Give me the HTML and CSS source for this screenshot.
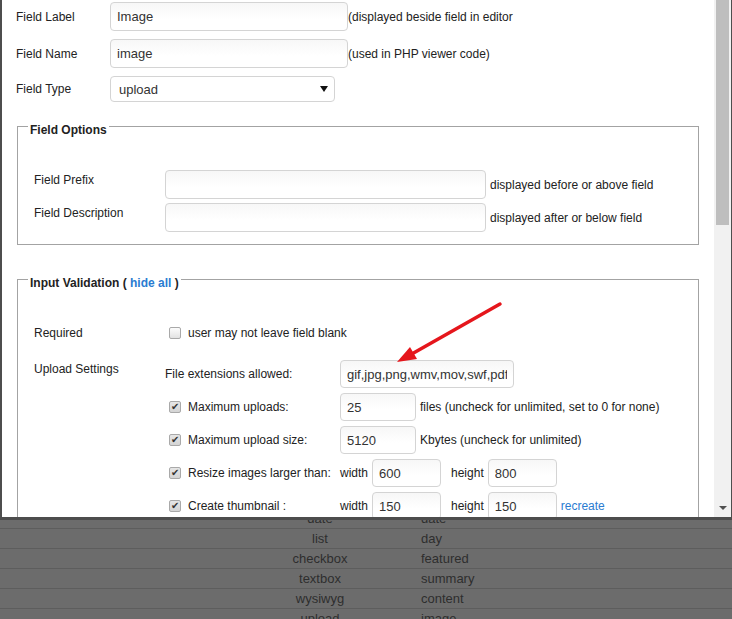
FILE: index.html
```html
<!DOCTYPE html>
<html lang="en">
<head>
<meta charset="UTF-8">
<meta name="viewport" content="width=device-width, initial-scale=1.0">
<title>Edit Field</title>
<link rel="stylesheet" href="styles.css">
</head>
<body>
<div class="dialog">
  <div class="dialog-body">
    <div class="field-row">
      <label class="field-label">Field Label</label>
      <input class="text field-input" type="text" value="Image"><span class="hint tight">(displayed beside field in editor</span>
    </div>
    <div class="field-row">
      <label class="field-label">Field Name</label>
      <input class="text field-input" type="text" value="image"> <span class="hint">(used in PHP viewer code)</span>
    </div>
    <div class="field-row">
      <label class="field-label">Field Type</label>
      <span class="select-wrap">
        <select class="select">
          <option>upload</option>
        </select>
      </span>
    </div>

    <fieldset class="group options">
      <legend>Field Options</legend>
      <div class="option-grid">
        <label class="option-label">Field Prefix</label>
        <input class="text option-input" type="text">
        <span class="hint">displayed before or above field</span>

        <label class="option-label">Field Description</label>
        <input class="text option-input" type="text">
        <span class="hint">displayed after or below field</span>
      </div>
    </fieldset>

    <fieldset class="group validation">
      <legend>Input Validation ( <a href="#" class="link">hide all</a> )</legend>
      <div class="validation-row required">
        <label class="option-label">Required</label>
        <label class="check-line"><input type="checkbox" class="check">user may not leave field blank</label>
      </div>
      <div class="validation-row upload">
        <label class="option-label">Upload Settings</label>
        <div class="upload-grid">
          <span class="cell">File extensions allowed:</span>
          <span class="cell"><input class="text ext-input" type="text" value="gif,jpg,png,wmv,mov,swf,pdf,doc,docx,zip"></span>

          <label class="cell"><input type="checkbox" class="check" checked>Maximum uploads:</label>
          <span class="cell"><input class="text num-input" type="text" value="25"><span class="hint">files (uncheck for unlimited, set to 0 for none)</span></span>

          <label class="cell"><input type="checkbox" class="check" checked>Maximum upload size:</label>
          <span class="cell"><input class="text num-input" type="text" value="5120"><span class="hint">Kbytes (uncheck for unlimited)</span></span>

          <label class="cell"><input type="checkbox" class="check" checked>Resize images larger than:</label>
          <span class="cell">width<input class="text size-input" type="text" value="600"><span class="dim">height</span><input class="text size-input" type="text" value="800"></span>

          <label class="cell"><input type="checkbox" class="check" checked>Create thumbnail :</label>
          <span class="cell">width<input class="text size-input" type="text" value="150"><span class="dim">height</span><input class="text size-input" type="text" value="150"><a href="#" class="link recreate">recreate</a></span>
        </div>
      </div>
    </fieldset>
  </div>

  <div class="scrollbar">
    <div class="thumb"></div>
    <div class="track"></div>
    <div class="scroll-down"></div>
  </div>
</div>

<div class="list">
  <div class="list-row"><span>date</span><span>date</span></div>
  <div class="list-row"><span>list</span><span>day</span></div>
  <div class="list-row"><span>checkbox</span><span>featured</span></div>
  <div class="list-row"><span>textbox</span><span>summary</span></div>
  <div class="list-row"><span>wysiwyg</span><span>content</span></div>
  <div class="list-row"><span>upload</span><span>image</span></div>
</div>

<!-- annotation arrow drawn over the screenshot -->
<svg class="note-arrow" width="732" height="619" viewBox="0 0 732 619">
  <line x1="500" y1="304" x2="410" y2="355" stroke="#e5161c" stroke-width="3.5" stroke-linecap="round"/>
  <polygon points="397,362 410,347 417,359" fill="#e5161c"/>
</svg>
</body>
</html>
```

FILE: styles.css
```css
* {
  box-sizing: border-box;
}

html,
body {
  margin: 0;
  height: 100%;
  overflow: hidden;
}

body {
  position: relative;
  background-color: #6c6c6c;
  font-family: "Liberation Sans", Arial, sans-serif;
  font-size: 12px;
  line-height: 14px;
  color: #222;
}

/* DIALOG */
.dialog {
  position: relative;
  z-index: 1;
  display: flex;
  height: 520px;
  background-color: #fff;
  border-left: 2px solid #4e4e4e;
  border-right: 1px solid #4e4e4e;
  border-bottom: 3px solid #4d4d4d;
  overflow: hidden;
}

.dialog-body {
  flex: 1;
  padding: 2px 0 0 14px;
  overflow: hidden;
}

/* Inputs */
.text {
  height: 28px;
  margin: 0;
  padding: 0 6px;
  border: 1px solid #d4d4d4;
  border-radius: 4px;
  background: linear-gradient(#f7f7f7, #fff 60%);
  font-family: "Liberation Sans", Arial, sans-serif;
  font-size: 13px;
  color: #333;
  outline: none;
}

.hint {
  margin-left: 4px;
  white-space: nowrap;
}

.hint.tight {
  margin-left: 1px;
}

/* Top rows */
.field-row {
  display: flex;
  align-items: center;
  margin-bottom: 8px;
}

.field-row .hint {
  margin-left: 0;
}

.field-label {
  width: 94px;
  flex-shrink: 0;
}

.field-input {
  width: 238px;
  height: 29px;
}

.select-wrap {
  position: relative;
  display: inline-block;
}

.select {
  appearance: none;
  -webkit-appearance: none;
  width: 225px;
  height: 26px;
  padding: 0 8px;
  border: 1px solid #d4d4d4;
  border-radius: 4px;
  background-color: #fff;
  font-family: "Liberation Sans", Arial, sans-serif;
  font-size: 13px;
  color: #333;
}

.select-wrap::after {
  content: "";
  position: absolute;
  right: 7px;
  top: 10px;
  border-left: 4px solid transparent;
  border-right: 4px solid transparent;
  border-top: 6px solid #111;
  pointer-events: none;
}

/* FIELDSETS */
.group {
  margin: 0 15px 0 1px;
  padding: 0 12px 12px 10px;
  border: 1px solid #a3a3a3;
}

.group legend {
  padding: 8px 2px 0;
  font-weight: bold;
  line-height: 14px;
}

.options {
  margin-top: 13px;
}

.validation {
  margin-top: 23px;
  padding-bottom: 40px;
}

.option-grid {
  display: grid;
  grid-template-columns: 131px 321px auto;
  row-gap: 4px;
  margin: 33px 0 0 6px;
}

.option-label {
  padding-top: 3px;
}

.option-input {
  height: 29px;
  width: 321px;
}

.option-grid .hint {
  align-self: center;
}

.link {
  color: #2a7cd1;
  text-decoration: none;
}

/* Validation rows */
.validation-row {
  display: grid;
  grid-template-columns: 131px auto;
  margin-left: 6px;
}

.required {
  margin-top: 33px;
  height: 20px;
  align-items: center;
}

.required .option-label {
  padding-top: 0;
}

.upload {
  margin-top: 17px;
}

.upload .option-label {
  padding-top: 2px;
}

.check-line {
  display: flex;
  align-items: center;
}

.check {
  appearance: none;
  -webkit-appearance: none;
  position: relative;
  width: 12px;
  height: 12px;
  margin: 0 7px 0 4px;
  flex-shrink: 0;
  border: 1px solid #a9a9a9;
  border-radius: 2px;
  background: linear-gradient(#fcfcfc, #e2e2e2);
}

.check:checked {
  background: linear-gradient(#e6e6e6, #d4d4d4);
}

.check:checked::after {
  content: "\2714";
  position: absolute;
  left: 1px;
  top: -2px;
  font-size: 10px;
  line-height: 14px;
  color: #333;
}

.upload-grid {
  display: grid;
  grid-template-columns: 175px auto;
  row-gap: 5px;
}

.cell {
  display: flex;
  align-items: center;
  height: 28px;
  white-space: nowrap;
}

.ext-input {
  width: 174px;
}

.num-input {
  width: 76px;
}

.size-input {
  width: 69px;
  margin-left: 4px;
}

.dim {
  margin-left: 10px;
}

.recreate {
  margin-left: 4px;
}

/* Fake scrollbar of the dialog */
.scrollbar {
  display: flex;
  flex-direction: column;
  width: 17px;
  background-color: #f1f1f1;
}

.thumb {
  height: 225px;
  margin: 0 2px;
  background-color: #bebebe;
}

.track {
  flex: 1;
}

.scroll-down {
  height: 17px;
  display: flex;
  justify-content: center;
  align-items: center;
}

.scroll-down::after {
  content: "";
  border-left: 4px solid transparent;
  border-right: 4px solid transparent;
  border-top: 4px solid #505050;
  margin-top: -2px;
}

/* LIST UNDER THE DIALOG */
.list {
  margin-top: -12px;
  font-size: 13px;
  color: #2e2e2e;
}

.list-row {
  display: grid;
  grid-template-columns: 220px 200px 1fr;
  height: 20px;
  line-height: 19px;
  border-top: 1px solid #5d5d5d;
}

.list-row span:first-child {
  grid-column: 2;
  text-align: center;
}

.list-row span:last-child {
  padding-left: 1px;
}

.note-arrow {
  position: absolute;
  top: 0;
  left: 0;
  z-index: 2;
  pointer-events: none;
}
```
